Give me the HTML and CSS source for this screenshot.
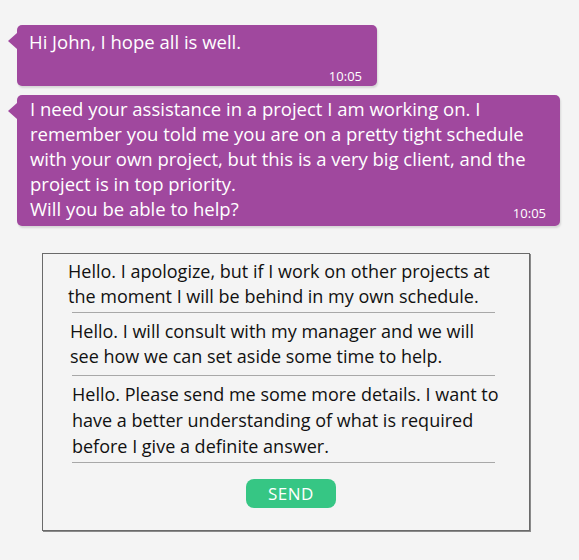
FILE: index.html
```html
<!DOCTYPE html>
<html>
<head>
<meta charset="utf-8">
<link rel="stylesheet" href="styles.css">
</head>
<body>
<div class="chat">
  <div class="bubble bubble-short">
    <p class="msg">Hi John, I hope all is well.</p>
    <span class="time">10:05</span>
  </div>
  <div class="bubble bubble-long">
    <p class="msg">I need your assistance in a project I am working on. I<br>remember you told me you are on a pretty tight schedule<br>with your own project, but this is a very big client, and the<br>project is in top priority.<br>Will you be able to help?</p>
    <span class="time">10:05</span>
  </div>
</div>
<div class="box">
  <div class="opt opt-1"><p>Hello. I apologize, but if I work on other projects at<br>the moment I will be behind in my own schedule.</p></div>
  <div class="opt opt-2"><p>Hello. I will consult with my manager and we will<br>see how we can set aside some time to help.</p></div>
  <div class="opt opt-3"><p>Hello. Please send me some more details. I want to<br>have a better understanding of what is required<br>before I give a definite answer.</p></div>
  <button class="send">SEND</button>
</div>
</body>
</html>
```
FILE: styles.css
```css
html, body {
  margin: 0;
  background: #f4f4f4;
  width: 579px;
  height: 560px;
  overflow: hidden;
}
body {
  font-family: "Open Sans", "Noto Sans", sans-serif;
}
.chat {
  display: flex;
  flex-direction: column;
  align-items: flex-start;
  gap: 9px;
  padding: 25px 0 0 17px;
}
.bubble {
  position: relative;
  background: #a0489e;
  color: #fff;
  border-radius: 5px;
  box-shadow: 1px 2px 2px rgba(0,0,0,0.12);
  box-sizing: border-box;
}
.bubble::before {
  content: "";
  position: absolute;
  left: -9px;
  top: 8px;
  border-style: solid;
  border-width: 8px 9px 8px 0;
  border-color: transparent #a0489e transparent transparent;
}
.msg {
  margin: 0;
  font-size: 18.5px;
  line-height: 25px;
  white-space: nowrap;
}
.time {
  font-size: 13px;
  line-height: 15px;
  flex-shrink: 0;
}
.bubble-short {
  width: 360px;
  height: 61px;
  padding: 4px 15px 0 12px;
  display: flex;
  flex-direction: column;
}
.bubble-short .time {
  align-self: flex-end;
  margin-top: 15px;
}
.bubble-long {
  width: 543px;
  height: 131px;
  padding: 1px 14px 0 13px;
  display: flex;
  justify-content: space-between;
}
.bubble-long .msg {
  flex: 1;
  min-width: 0;
}
.bubble-long .time {
  align-self: flex-end;
  margin-bottom: 5px;
}
.box {
  margin: 27px 0 0 42px;
  width: 488px;
  height: 278px;
  box-sizing: border-box;
  border: 1px solid #6a6a6a;
  box-shadow: 1px 1px 0 #8a8a8a;
  padding-top: 5px;
  display: flex;
  flex-direction: column;
  align-items: flex-start;
}
.opt {
  margin-left: 29px;
  width: 423px;
  border-bottom: 1px solid #a8a8a8;
}
.opt p {
  margin: 0;
  font-size: 18px;
  line-height: 25px;
  color: #111;
  white-space: nowrap;
}
.opt-1 p { margin-left: -4px; padding-bottom: 3px; }
.opt-2 p { margin-left: -2px; padding-top: 6px; padding-bottom: 6px; }
.opt-3 p { margin-left: 0; padding-top: 5px; padding-bottom: 3px; line-height: 26px; }
.send {
  margin: 16px 0 0 203px;
  width: 90px;
  height: 29px;
  border: 0;
  border-radius: 8px;
  background: #36c684;
  color: #fff;
  font-family: "Open Sans", "Noto Sans", sans-serif;
  font-size: 17px;
  letter-spacing: 0.5px;
  padding: 0;
}
```
